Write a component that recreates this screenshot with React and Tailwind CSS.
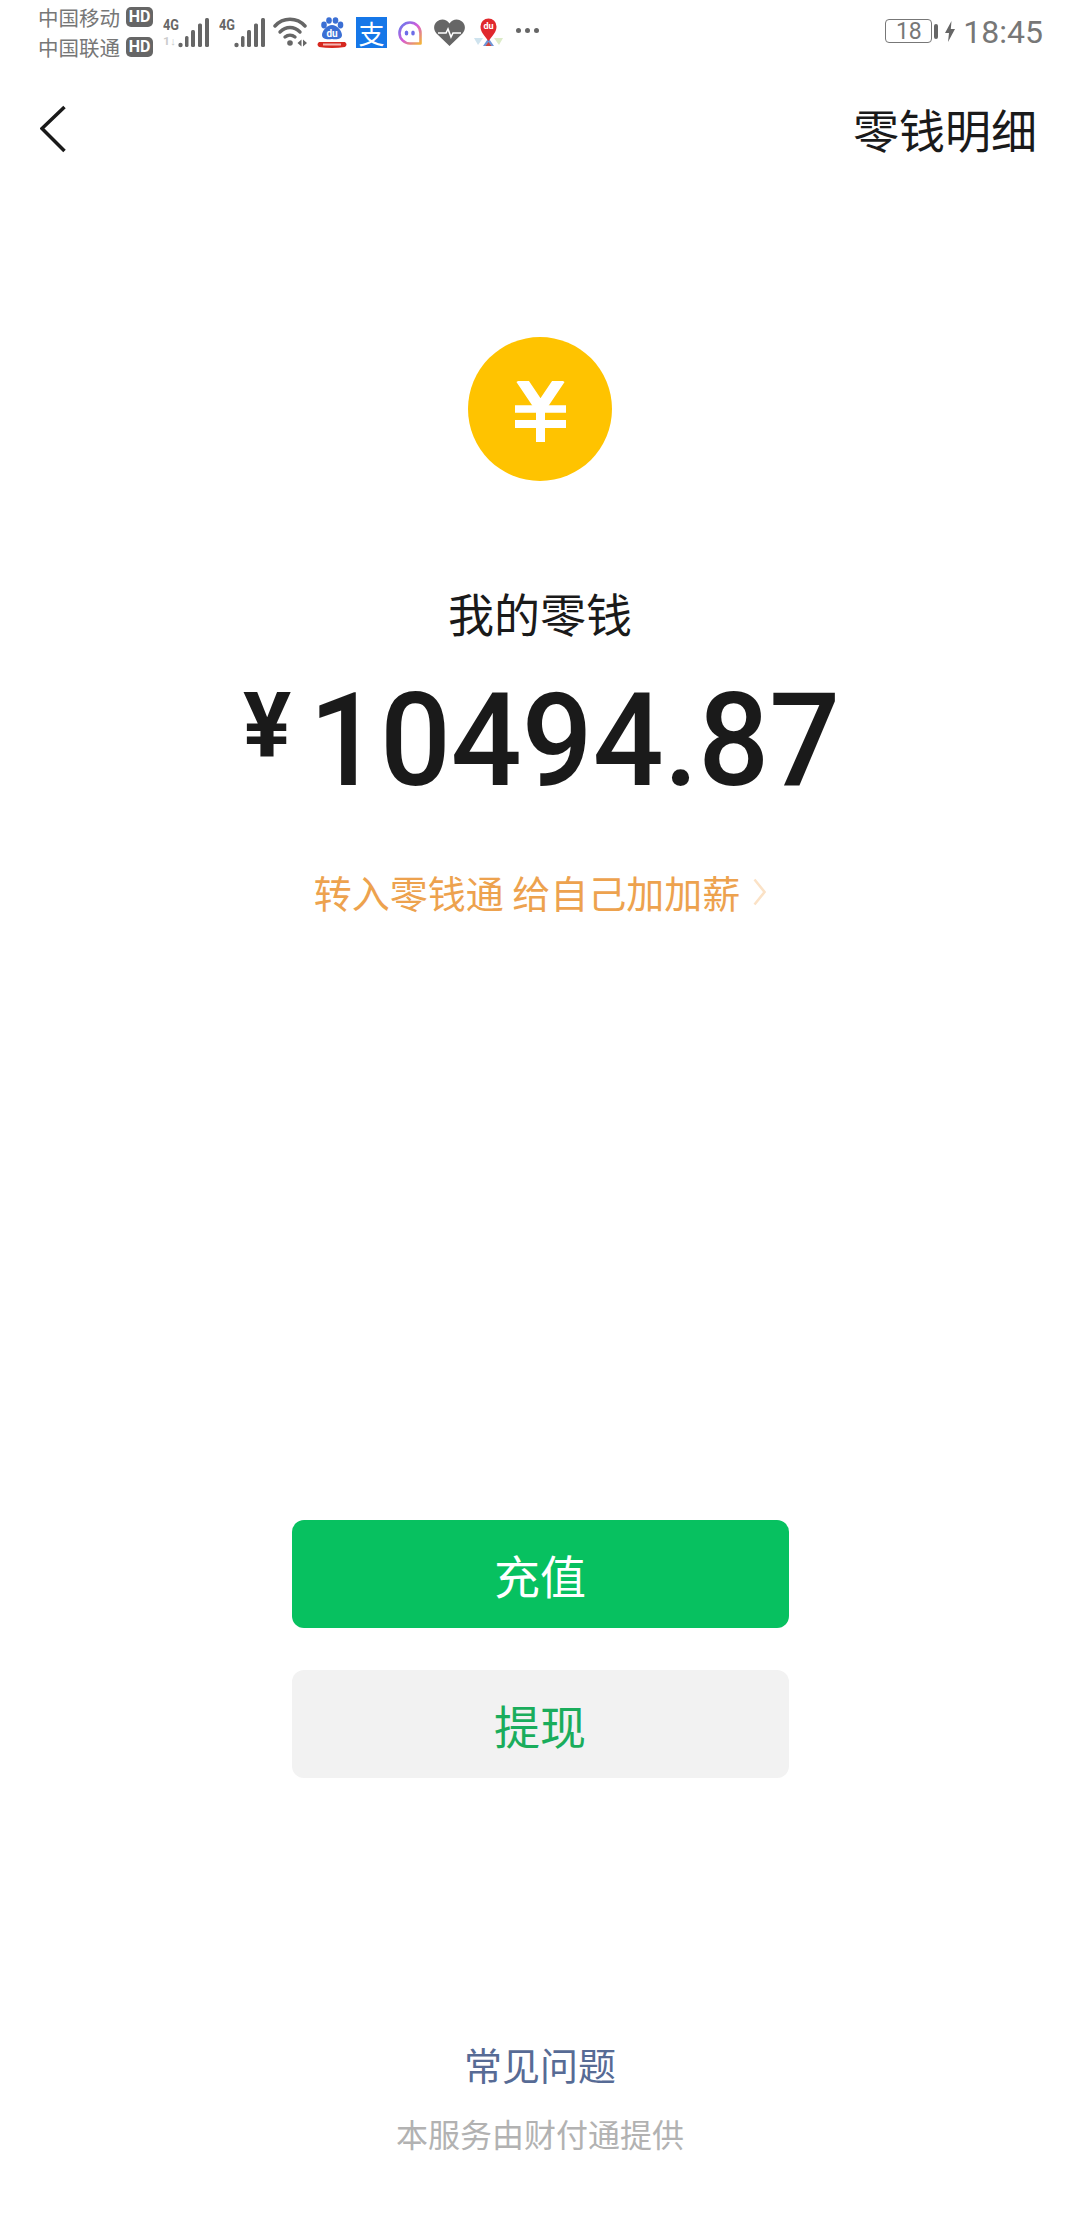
const CJK = "font-['Noto_Sans_CJK_SC','Noto_Sans',sans-serif]"

function Signal({ second }) {
  return (
    <svg width="46" height="34" viewBox="0 0 46 34" fill="#666">
      <text transform="scale(0.85 1)" x="0" y="13" fontSize="15" fontWeight="700" fontFamily="Roboto, sans-serif">4G</text>
      {!second && <text x="0" y="28" fontSize="11" fontWeight="700" fill="#ccc" fontFamily="Roboto, sans-serif" textLength="13" lengthAdjust="spacingAndGlyphs">1↓</text>}
      <circle cx="17.500" cy="28" r="2.200" />
      <rect x="22" y="19" width="3.500" height="11" rx="1.500" />
      <rect x="28" y="13" width="4" height="17" rx="1.500" />
      <rect x="35" y="6.500" width="4" height="23.500" rx="1.500" />
      <rect x="42" y="1" width="4" height="29" rx="1.500" />
    </svg>
  )
}

function Wifi() {
  return (
    <svg width="35" height="30" viewBox="0 0 35 30" fill="none" stroke="#666" strokeWidth="3.400" strokeLinecap="round">
      <path d="M2 9 C10 0 24 0 32 9" />
      <path d="M7 15 C13 9 21 9 27 15" />
      <path d="M12 20 C15 17.500 19 17.500 22 20" />
      <circle cx="17" cy="26" r="2.800" fill="#666" stroke="none" />
      <path d="M24.500 26 l4-3.500 v7z M30 22.500 l4 3.500 l-4 3.500z" fill="#666" stroke="none" />
    </svg>
  )
}

function Baidu() {
  return (
    <svg width="32" height="32" viewBox="0 0 32 32">
      <ellipse cx="8" cy="8" rx="2.800" ry="3.400" fill="#3b6fd4" />
      <ellipse cx="13" cy="3.500" rx="2.800" ry="3.200" fill="#3b6fd4" />
      <ellipse cx="19.500" cy="3.500" rx="2.800" ry="3.200" fill="#3b6fd4" />
      <ellipse cx="24.500" cy="8" rx="2.800" ry="3.400" fill="#3b6fd4" />
      <path d="M16 8 C21 8 26 14 26 18 C26 22 21 23 16 22 C11 23 6 22 6 18 C6 14 11 8 16 8z" fill="#3b6fd4" />
      <text x="16" y="20" textAnchor="middle" fontSize="10" fontWeight="700" fill="#fff" fontFamily="Roboto, sans-serif">du</text>
      <path d="M3 25 H29 Q32 27.500 29 30 Q16 32 3 30 Q0 27.500 3 25Z" fill="#d6281f" />
      <rect x="7" y="26.500" width="18" height="2" fill="#f4b7b3" />
    </svg>
  )
}

function Alipay() {
  return (
    <div className={`w-[31px] h-[31px] bg-[#1677e8] flex items-center justify-center text-white text-[26px] leading-none ${CJK}`}>支</div>
  )
}

function Bubble() {
  return (
    <svg width="24" height="24" viewBox="0 0 24 24" fill="none">
      <defs>
        <linearGradient id="bubble" x1="0" y1="0" x2="1" y2="1">
          <stop offset="0" stopColor="#5a7cf0" />
          <stop offset="0.5" stopColor="#d65ad8" />
          <stop offset="1" stopColor="#f2b33a" />
        </linearGradient>
      </defs>
      <path d="M22.500 22.500 H12 A10.500 10.500 0 1 1 22.500 12 Z" stroke="url(#bubble)" strokeWidth="2.600" strokeLinejoin="round" />
      <ellipse cx="8.500" cy="12" rx="1.800" ry="2.500" fill="#6d6de8" />
      <ellipse cx="15" cy="12" rx="1.800" ry="2.500" fill="#6d6de8" />
    </svg>
  )
}

function Heart() {
  return (
    <svg width="31" height="27" viewBox="0 0 31 27">
      <path d="M15.500 27 L2.500 14.500 C-1 11 -0.500 5 3 2.500 C7 -1 12.500 0 15.500 4.500 C18.500 0 24 -1 28 2.500 C31.500 5 32 11 28.500 14.500 Z" fill="#666" />
      <path d="M4 14 H12 L14 10 L17 18 L19 14 H27" fill="none" stroke="#fff" strokeWidth="1.600" />
    </svg>
  )
}

function Pin() {
  return (
    <svg width="31" height="30" viewBox="0 0 31 30">
      <path d="M1 21 L10 21 L5 28 Z" fill="#cfe3ee" />
      <path d="M21 21 L30 21 L26 28 Z" fill="#dcebc8" />
      <path d="M10 29 L15.500 21 L21 29 Z" fill="#6f95d8" />
      <path d="M12.500 29 L15.500 25 L18.500 29 Z" fill="#d2453c" />
      <path d="M15.500 24 C11 18 7.500 15 7.500 9.500 A8 8 0 0 1 23.500 9.500 C23.500 15 20 18 15.500 24Z" fill="#e0282d" />
      <text x="15.500" y="12" textAnchor="middle" fontSize="9" fontWeight="700" fill="#fff" fontFamily="Roboto, sans-serif">du</text>
    </svg>
  )
}

function CarrierRow({ name }) {
  return (
    <div className={`flex items-center h-[30px] text-[20.500px] text-[#777] leading-none ${CJK}`}>
      <span>{name}</span>
      <span className="ml-[6px] w-[27px] h-[20px] rounded-[5px] bg-[#666] text-white text-[16px] font-bold flex items-center justify-center font-['Roboto',sans-serif]">HD</span>
    </div>
  )
}

function StatusBar() {
  return (
    <div className="h-[68px] flex justify-between pl-[38px] pr-[37px]">
      <div className="flex">
        <div className="pt-[2px]">
          <CarrierRow name="中国移动" />
          <CarrierRow name="中国联通" />
        </div>
        <div className="flex items-start gap-[8px] pt-[17px] ml-[10px]">
          <Signal />
          <div className="ml-[2px]"><Signal second /></div>
          <Wifi />
          <Baidu />
          <Alipay />
          <div className="ml-[3px] mt-[4px]"><Bubble /></div>
          <div className="ml-[4px] mt-[2px]"><Heart /></div>
          <Pin />
          <div className="flex gap-[4px] ml-[4px] mt-[11px]">
            <span className="w-[5px] h-[5px] rounded-full bg-[#666]" />
            <span className="w-[5px] h-[5px] rounded-full bg-[#666]" />
            <span className="w-[5px] h-[5px] rounded-full bg-[#666]" />
          </div>
        </div>
      </div>
      <div className="flex items-start pt-[19px]">
        <div className="w-[47px] h-[24px] border border-[#777] rounded-[4px] flex items-center justify-center text-[23px] leading-none text-[#777] font-['Roboto',sans-serif]">18</div>
        <div className="w-[4px] h-[15px] bg-[#666] rounded-[2px] mt-[5px] ml-[2px]" />
        <svg className="ml-[7px] mt-[2px]" width="10" height="21" viewBox="0 0 10 21" fill="#666">
          <path d="M6.500 0 L0 12 H4 L3 21 L10 8 H5.800Z" />
        </svg>
        <span className="ml-[8px] text-[32px] leading-[26px] text-[#777] font-['Roboto',sans-serif]">18:45</span>
      </div>
    </div>
  )
}

function NavBar() {
  return (
    <div className="h-[121px] flex items-center justify-between pl-[40px] pr-[43px]">
      <svg width="26" height="48" viewBox="0 0 26 48" fill="none" stroke="#1a1a1a" strokeWidth="3.500">
        <path d="M24.500 2 L2 23.500 L24.500 46" />
      </svg>
      <span className={`mb-[2px] text-[46px] leading-[60px] text-[#1a1a1a] ${CJK}`}>零钱明细</span>
    </div>
  )
}

export default function App() {
  return (
    <div className="w-[1080px] h-[2220px] bg-white overflow-hidden">
      <StatusBar />
      <NavBar />

      <div className="flex flex-col items-center">
        {/* Coin */}
        <div className="mt-[148px] w-[144px] h-[144px] rounded-full bg-[#ffc300] flex items-center justify-center">
          <svg className="mt-[5px]" width="51" height="61" viewBox="0 0 51 61" fill="none" stroke="#fff" strokeWidth="11">
            <path d="M6 -2 L25.500 27 L45 -2" />
            <path d="M25.500 26 V61" strokeWidth="9" />
            <path d="M0 28 H51" strokeWidth="7.500" />
            <path d="M0 43 H51" strokeWidth="8" />
          </svg>
        </div>

        <div className={`mt-[101px] text-[46px] leading-[60px] text-[#1a1a1a] ${CJK}`}>我的零钱</div>

        {/* Balance */}
        <div className="mt-[24px] h-[150px] w-[594px] flex items-start text-[#1a1a1a] font-['Roboto',sans-serif] font-medium">
          <span className="w-[66px] shrink-0 text-[90px] leading-[122px] font-bold">¥</span>
          <span className="text-[130px] leading-[150px] whitespace-nowrap origin-left scale-x-[0.96]">10494.87</span>
        </div>

        <div className={`mt-[51px] flex items-center text-[38px] leading-[50px] text-[#eda24e] ${CJK}`}>
          <span className="whitespace-pre">转入零钱通 给自己加加薪</span>
          <svg className="ml-[13px]" width="13" height="28" viewBox="0 0 13 28" fill="none" stroke="#fbe2c6" strokeWidth="2.500">
            <path d="M1.500 1.500 L11.500 14 L1.500 26.500" />
          </svg>
        </div>

        {/* Buttons */}
        <button className={`mt-[603px] w-[497px] h-[108px] rounded-[12px] bg-[#07c160] text-white text-[46px] ${CJK}`}>充值</button>
        <button className={`mt-[42px] w-[497px] h-[108px] rounded-[12px] bg-[#f2f2f2] text-[#1aad5c] text-[46px] ${CJK}`}>提现</button>

        <div className={`mt-[261px] text-[38px] leading-[50px] text-[#576b95] ${CJK}`}>常见问题</div>
        <div className={`mt-[19px] text-[32px] leading-[50px] text-[#b2b2b2] ${CJK}`}>本服务由财付通提供</div>
      </div>
    </div>
  )
}
